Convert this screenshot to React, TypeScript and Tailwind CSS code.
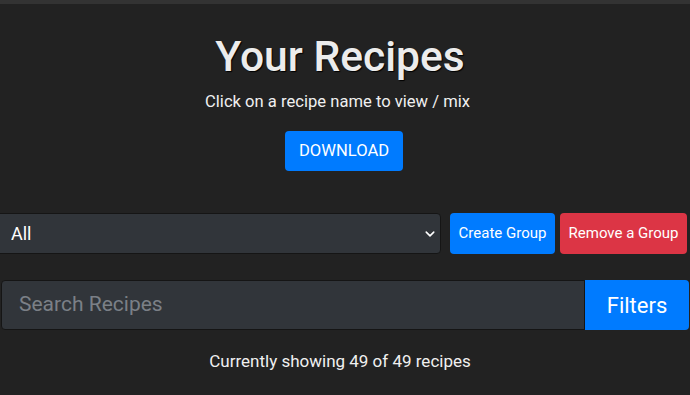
import { useState } from 'react';

export default function App() {
  const [group, setGroup] = useState('All');
  const [search, setSearch] = useState('');

  return (
    <div className="min-h-screen bg-[#222222] text-[#f2f2f2] font-['Roboto',sans-serif]">
      <div className="h-[4px] bg-[#333333]" />

      <div className="flex flex-col items-center pr-[10px]">
        <h1 className="mt-[26px] text-[42.6px] leading-[52px] font-medium text-[#ececec] [text-shadow:1px_1px_1px_#000]">
          Your Recipes
        </h1>
        <p className="mt-[8px] mr-[5px] text-[16.6px] leading-[24px] text-[#f0f0f0]">
          Click on a recipe name to view / mix
        </p>
        <button className="mt-[17px] ml-[8px] h-[40px] px-[14px] rounded-[4px] bg-[#007bff] text-white text-[16.6px]">
          DOWNLOAD
        </button>
      </div>

      {/* Group row */}
      <div className="mt-[42px] flex items-center">
        <div className="relative -ml-[4px] w-[445px]">
          <select
            value={group}
            onChange={(e) => setGroup(e.target.value)}
            className="h-[41px] w-full appearance-none rounded-[4px] border border-[#151515] bg-[#31353a] pl-[14px] text-[18px] text-white outline-none"
          >
            <option>All</option>
          </select>
          <svg
            className="pointer-events-none absolute right-[6px] top-1/2 -translate-y-1/2"
            width="10"
            height="10"
            viewBox="0 0 16 16"
          >
            <path d="M2 5l6 6 6-6" fill="none" stroke="#ffffff" strokeWidth="2.5" strokeLinecap="round" strokeLinejoin="round" />
          </svg>
        </div>
        <button className="ml-[9px] h-[41px] w-[105px] rounded-[4px] bg-[#007bff] text-[15px] text-white">
          Create Group
        </button>
        <button className="ml-[5px] h-[41px] w-[127px] rounded-[4px] bg-[#dc3545] text-[15px] text-white">
          Remove a Group
        </button>
      </div>

      {/* Search row */}
      <div className="mt-[26px] ml-[1px] flex h-[50px] w-[688px]">
        <input
          type="search"
          value={search}
          onChange={(e) => setSearch(e.target.value)}
          placeholder="Search Recipes"
          className="flex-1 min-w-0 rounded-l-[4px] border border-[#151515] bg-[#31353a] px-[17px] text-[21px] text-white outline-none placeholder:text-[#7b8087]"
        />
        <button className="w-[104px] rounded-r-[4px] bg-[#007bff] text-[22px] text-white">
          Filters
        </button>
      </div>

      <p className="mt-[19px] pr-[10px] text-center text-[17px] leading-[24px] text-[#f0f0f0]">
        Currently showing 49 of 49 recipes
      </p>
    </div>
  );
}
